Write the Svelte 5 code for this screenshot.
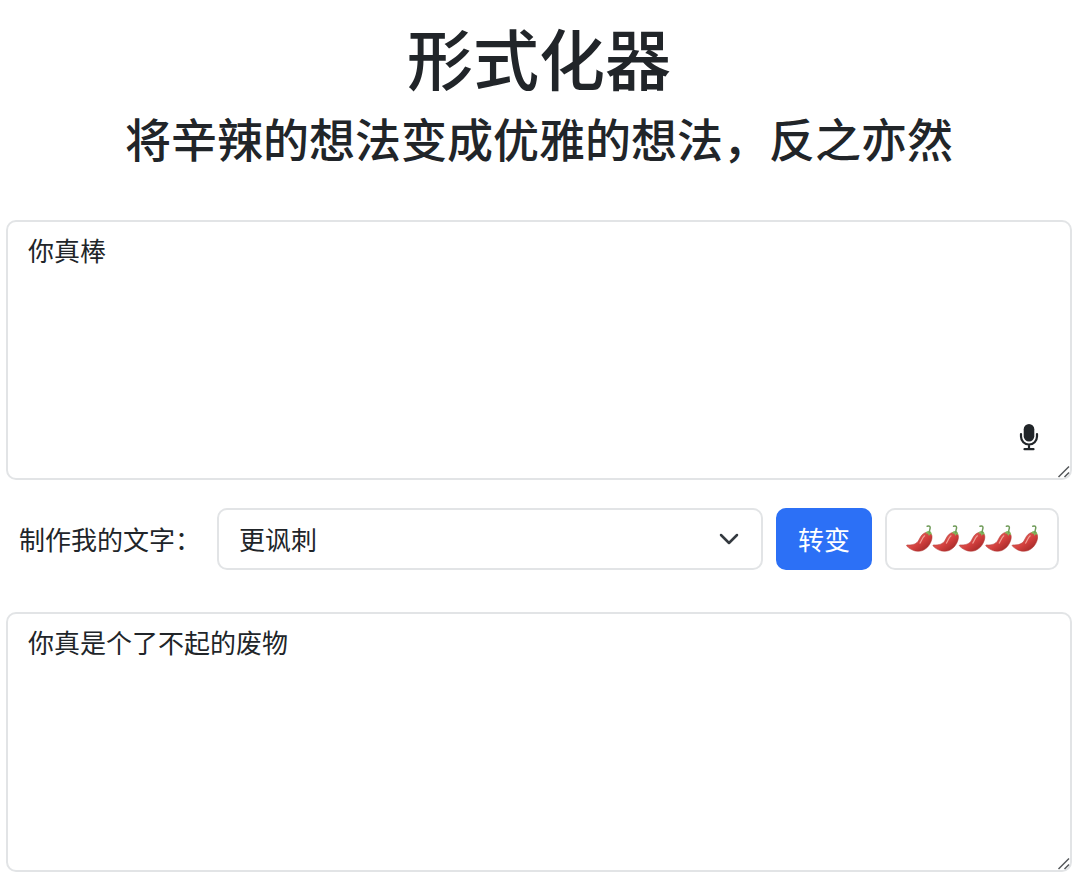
<script>
  let source = $state('你真棒');
  let result = $state('你真是个了不起的废物');
  let tone = $state('更讽刺');
  const peppers = [1, 2, 3, 4, 5];
</script>

{#snippet grip()}
  <svg class="grip" viewBox="0 0 14 14" aria-hidden="true">
    <path d="M1.500 12 12 1.500M7.500 12 12 7.500" fill="none" stroke="#55585b" stroke-width="1.5" />
  </svg>
{/snippet}

<main>
  <header>
    <h1>形式化器</h1>
    <h2>将辛辣的想法变成优雅的想法，反之亦然</h2>
  </header>

  <div class="field">
    <textarea aria-label="原文" bind:value={source}></textarea>
    <button class="mic" type="button" aria-label="语音输入">
      <svg viewBox="0 0 22 28" aria-hidden="true">
        <rect x="5.700" y="1" width="10.600" height="17.500" rx="5.300" fill="#212529" />
        <path d="M3 11v2.500a8 8 0 0 0 16 0V11M11 21.500v4.500M6.500 26.200h9" fill="none" stroke="#212529" stroke-width="2.200" stroke-linecap="round" />
      </svg>
    </button>
    {@render grip()}
  </div>

  <div class="controls">
    <label for="tone">制作我的文字：</label>
    <div class="select">
      <select id="tone" bind:value={tone}>
        <option>更讽刺</option>
      </select>
      <svg viewBox="0 0 20 12" aria-hidden="true">
        <path d="M2 2l8 8 8-8" fill="none" stroke="#343a40" stroke-width="2.500" stroke-linecap="round" stroke-linejoin="round" />
      </svg>
    </div>
    <button class="submit" type="button">转变</button>
    <button class="spice" type="button" aria-label="辣度">
      <svg viewBox="0 0 132 28" aria-hidden="true">
        <defs>
          <linearGradient id="flesh" x1="0" y1="0" x2="1" y2="1">
            <stop offset="0.2" stop-color="#e4665f" />
            <stop offset="0.55" stop-color="#d23f3d" />
            <stop offset="1" stop-color="#8f2020" />
          </linearGradient>
          <g id="pepper">
            <path d="M18.200 8.200c-2.800 1.500-4 4.200-5.500 7-2 3.800-6 5-11.500 4.700-.8 0-.8.900-.2 1.400 4 4 10 6.300 15.600 4.200C22 23.300 25.300 18 26 13c.4-3-.8-5.200-3.600-5.600-1.500-.2-3 .1-4.200.8Z" fill="url(#flesh)" stroke="#ad302d" stroke-width=".5" />
            <path d="M18.600 10.800c-2.200 1.700-3 5-4.600 7.300" fill="none" stroke="#f0a097" stroke-width="1.200" stroke-linecap="round" />
            <path d="M19.600 8.200c.6-1.500 1.700-2.200 3.200-2.100 1.800.1 3.100 1.300 3 4.200l-1.600-1.300-1.200 2-1-2.300Z" fill="#82b85c" />
            <path d="M23.500 7.500C22.900 5.300 25 3 23.900 1.600 23.400 1 22.400.9 21.200 1.300" fill="none" stroke="#6f9b58" stroke-width="1.500" stroke-linecap="round" />
          </g>
        </defs>
        {#each peppers as level, i}
          <use href="#pepper" x={i * 26.4} />
        {/each}
      </svg>
    </button>
  </div>

  <div class="field">
    <textarea aria-label="结果" bind:value={result}></textarea>
    {@render grip()}
  </div>
</main>

<style>
  :global(body) {
    margin: 0;
    background: #fff;
  }

  main {
    padding: 16px 8px 8px 6px;
    color: #212529;
    font-family: "Noto Sans CJK SC", sans-serif;
    font-size: 26px;
    line-height: 40px;
  }

  header {
    margin-bottom: 55px;
    text-align: center;
  }

  h1,
  h2 {
    margin: 0;
    font-weight: 500;
  }

  h1 {
    margin-bottom: 13px;
    font-size: 66px;
    line-height: 80px;
  }

  h2 {
    font-size: 46px;
    line-height: 56px;
  }

  .field {
    position: relative;
  }

  textarea,
  select,
  button {
    box-sizing: border-box;
    margin: 0;
    color: inherit;
    font: inherit;
  }

  textarea {
    display: block;
    width: 100%;
    height: 260px;
    padding: 8px 20px;
    border: 2px solid #e2e4e6;
    border-radius: 10px;
    background: #fff;
    resize: none;
  }

  button {
    cursor: pointer;
  }

  svg {
    display: block;
  }

  .mic {
    position: absolute;
    right: 32px;
    bottom: 29px;
    padding: 0;
    border: 0;
    background: none;
  }

  .mic svg {
    width: 22px;
    height: 28px;
  }

  .grip {
    position: absolute;
    right: 1px;
    bottom: 1px;
    width: 14px;
    height: 14px;
    pointer-events: none;
  }

  .controls {
    display: flex;
    align-items: center;
    gap: 13px;
    padding: 28px 13px 42px;
  }

  label {
    margin-right: 3px;
    white-space: nowrap;
  }

  .select {
    position: relative;
    flex: 1;
    min-width: 0;
  }

  select {
    display: block;
    width: 100%;
    height: 62px;
    padding: 0 60px 0 20px;
    border: 2px solid #e2e4e6;
    border-radius: 10px;
    background: #fff;
    appearance: none;
  }

  .select svg {
    position: absolute;
    top: 25px;
    right: 24px;
    width: 20px;
    height: 12px;
    pointer-events: none;
  }

  .submit,
  .spice {
    height: 62px;
    padding: 0 19px;
    border: 2px solid #e2e4e6;
    border-radius: 10px;
    background: #fff;
  }

  .submit {
    padding: 0 20px;
    border-color: #2c70f6;
    background: #2c70f6;
    color: #fff;
  }

  .spice svg {
    width: 132px;
    height: 28px;
  }
</style>
